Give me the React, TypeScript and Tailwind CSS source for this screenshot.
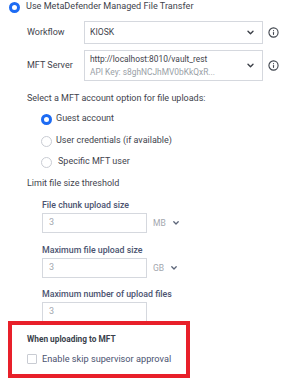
import { Info } from "lucide-react";

function Chevron({ small }: { small?: boolean }) {
  return small ? (
    <svg width="6" height="4" viewBox="0 0 6 4">
      <path d="M0.8 0.8 L3 3 L5.2 0.8" fill="none" stroke="#5b6478" strokeWidth="1.3" strokeLinecap="round" strokeLinejoin="round" />
    </svg>
  ) : (
    <svg width="7" height="5" viewBox="0 0 7 5">
      <path d="M1 1.2 L3.5 3.7 L6 1.2" fill="none" stroke="#3b3f47" strokeWidth="1.4" strokeLinecap="round" strokeLinejoin="round" />
    </svg>
  );
}

function Radio({ checked }: { checked?: boolean }) {
  return checked ? (
    <span className="w-[11px] h-[11px] rounded-full border-[3px] border-[#1d6bf3] bg-white shrink-0" />
  ) : (
    <span className="w-[11px] h-[11px] rounded-full border border-[#c9ccd3] bg-white shrink-0" />
  );
}

function NumberField({ label, unit }: { label: string; unit?: string }) {
  return (
    <div className="flex flex-col">
      <div className="h-[12px] leading-[12px] text-[8.8px] font-medium text-[#4b5370]">{label}</div>
      <div className="flex items-center mt-[2px]">
        <div className="w-[105px] h-[20px] border border-[#d5d8de] flex items-center pl-[6px] text-[9px] text-[#a3a7ae]">
          3
        </div>
        {unit && (
          <div className="flex items-center ml-[6px] gap-[7px] text-[8.5px] text-[#a3a7ae]">
            {unit}
            <Chevron small />
          </div>
        )}
      </div>
    </div>
  );
}

export default function App() {
  return (
    <div className="w-[283px] h-[384px] bg-white font-['Roboto',sans-serif] text-[#3f444d] text-[9px] overflow-hidden">
      <div className="flex items-center h-[14px] pl-[9px] gap-[6px]">
        <Radio checked />
        <span className="text-[9.1px]">Use MetaDefender Managed File Transfer</span>
      </div>

      <div className="pl-[27px]">
        <div className="flex items-center mt-[7px]">
          <span className="w-[57px]">Workflow</span>
          <div className="w-[179px] h-[23px] border border-[#d5d8de] flex items-center justify-between pl-[5px] pr-[8px]">
            <span className="text-[8.6px]">KIOSK</span>
            <Chevron />
          </div>
          <Info size={11} strokeWidth={2.4} className="ml-[5px] text-[#3f444d]" />
        </div>

        <div className="flex items-center mt-[6px]">
          <span className="w-[57px]">MFT Server</span>
          <div className="w-[179px] h-[31px] border border-[#d5d8de] flex items-center justify-between pl-[5px] pr-[8px]">
            <div className="flex flex-col leading-[13px]">
              <span className="text-[8.4px]">http://localhost:8010/vault_rest</span>
              <span className="text-[8.4px] text-[#9a9fa7]">API Key: s8ghNCJhMV0bKkQxR...</span>
            </div>
            <Chevron />
          </div>
          <Info size={11} strokeWidth={2.4} className="ml-[5px] text-[#3f444d]" />
        </div>

        <div className="h-[14px] leading-[14px] mt-[10px]">Select a MFT account option for file uploads:</div>

        <div className="flex flex-col pl-[14px]">
          <div className="flex items-center h-[14px] mt-[7px] gap-[4px]">
            <Radio checked />
            <span>Guest account</span>
          </div>
          <div className="flex items-center h-[14px] mt-[8px] gap-[4px]">
            <Radio />
            <span>User credentials (if available)</span>
          </div>
          <div className="flex items-center h-[14px] mt-[7px] gap-[6px]">
            <Radio />
            <span>Specific MFT user</span>
          </div>
        </div>

        <div className="h-[14px] leading-[14px] mt-[7px]">Limit file size threshold</div>

        <div className="flex flex-col pl-[15px]">
          <div className="mt-[9px]">
            <NumberField label="File chunk upload size" unit="MB" />
          </div>
          <div className="mt-[11px]">
            <NumberField label="Maximum file upload size" unit="GB" />
          </div>
          <div className="mt-[10px]">
            <NumberField label="Maximum number of upload files" />
          </div>
        </div>
      </div>

      <div className="relative ml-[8px] -mt-[1px] w-[182px] h-[57px] border-4 border-[#e8202a] bg-white pl-[15px]">
        <div className="mt-[8px] h-[12px] leading-[12px] text-[8.3px] font-bold text-[#3a3f4c]">When uploading to MFT</div>
        <div className="flex items-center mt-[7px] gap-[5px]">
          <span className="w-[10px] h-[10px] border border-[#c9ccd3] rounded-[1px] bg-white shrink-0" />
          <span className="text-[9.2px] text-[#4b5370] whitespace-nowrap">Enable skip supervisor approval</span>
        </div>
      </div>
    </div>
  );
}
